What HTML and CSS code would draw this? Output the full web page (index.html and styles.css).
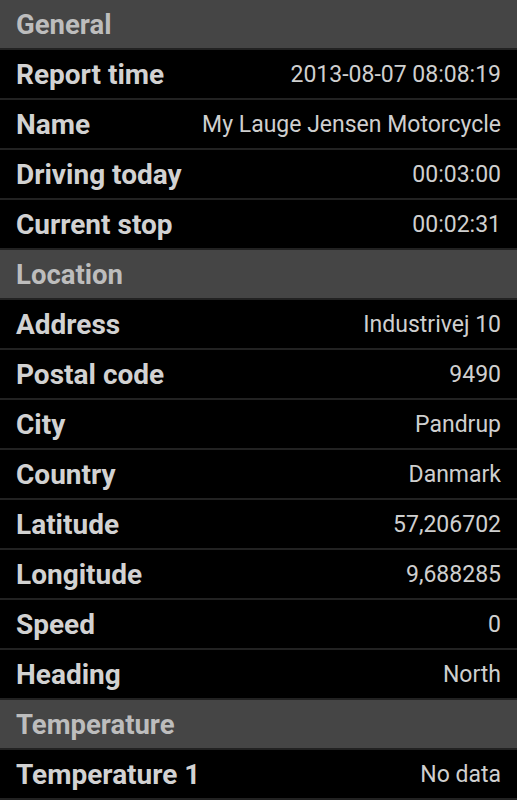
FILE: index.html
```html
<!DOCTYPE html>
<html lang="en">

<head>
    <meta charset="UTF-8">
    <meta name="viewport" content="width=device-width, initial-scale=1.0">
    <title>Vehicle details</title>
    <link rel="stylesheet" href="styles.css">
</head>

<body>
    <div class="detail-list">
        <div class="section-head">General</div>
        <div class="detail-row"><span class="label">Report time</span><span class="value">2013-08-07 08:08:19</span></div>
        <div class="detail-row"><span class="label">Name</span><span class="value">My Lauge Jensen Motorcycle</span></div>
        <div class="detail-row"><span class="label">Driving today</span><span class="value">00:03:00</span></div>
        <div class="detail-row"><span class="label">Current stop</span><span class="value">00:02:31</span></div>

        <div class="section-head">Location</div>
        <div class="detail-row"><span class="label">Address</span><span class="value">Industrivej 10</span></div>
        <div class="detail-row"><span class="label">Postal code</span><span class="value">9490</span></div>
        <div class="detail-row"><span class="label">City</span><span class="value">Pandrup</span></div>
        <div class="detail-row"><span class="label">Country</span><span class="value">Danmark</span></div>
        <div class="detail-row"><span class="label">Latitude</span><span class="value">57,206702</span></div>
        <div class="detail-row"><span class="label">Longitude</span><span class="value">9,688285</span></div>
        <div class="detail-row"><span class="label">Speed</span><span class="value">0</span></div>
        <div class="detail-row"><span class="label">Heading</span><span class="value">North</span></div>

        <div class="section-head">Temperature</div>
        <div class="detail-row"><span class="label">Temperature 1</span><span class="value">No data</span></div>
    </div>
</body>

</html>
```

FILE: styles.css
```css
body {
    margin: 0;
    background: #000;
    font-family: Roboto, "Open Sans", sans-serif;
    color: #cfcfcf;
}

.detail-list {
    display: flex;
    flex-direction: column;
}

.section-head {
    height: 48px;
    display: flex;
    align-items: center;
    padding: 0 16px;
    background: #454545;
    color: #bdbdbd;
    font-size: 27.5px;
    font-weight: bold;
    border-bottom: 2px solid #222;
}

.detail-row {
    height: 48px;
    display: flex;
    align-items: center;
    justify-content: space-between;
    padding: 0 16px;
    border-bottom: 2px solid #222;
}

.label {
    font-size: 28px;
    font-weight: bold;
    color: #d2d2d2;
}

.value {
    font-size: 23px;
    color: #cfcfcf;
}
```
